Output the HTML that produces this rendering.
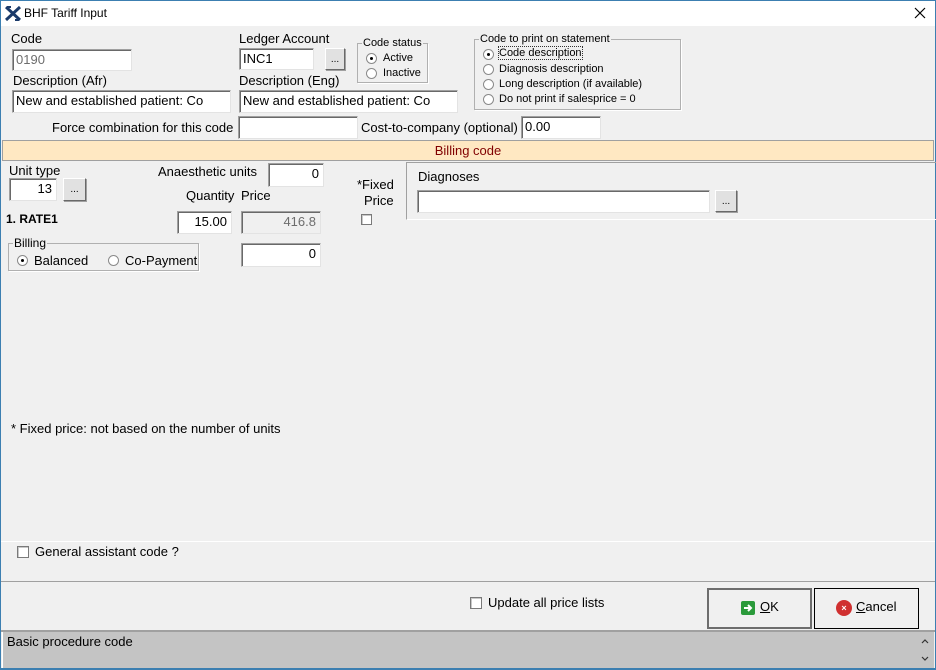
<!DOCTYPE html>
<html><head><style>
*{box-sizing:border-box;margin:0;padding:0}
body{width:936px;height:670px;position:relative;background:#f0f0f0;font-family:"Liberation Sans",sans-serif;font-size:13px;color:#000;overflow:hidden}
.a{position:absolute;white-space:nowrap}
.in{position:absolute;background:#fff;border:1px solid;border-color:#a0a0a0 #e3e3e3 #e3e3e3 #a0a0a0;box-shadow:inset 1px 1px 0 #696969;padding:2px 0 0 3px;font-size:13px;line-height:16px}
.r{text-align:right;padding-right:4px}
.btn{position:absolute;background:#e1e1e1;border:1px solid;border-color:#fff #696969 #696969 #fff;box-shadow:1px 1px 0 #a0a0a0;text-align:center;font-size:10px;line-height:22px}
.grp{position:absolute;border:1px solid #b0b0b0;box-shadow:1px 1px 0 #fff}
.grp .t{position:absolute;top:-8px;left:4px;background:#f0f0f0;font-size:11px;line-height:14px;padding:0 1px}
.rad{position:absolute;width:11px;height:11px;border-radius:50%;background:#fff;border:1px solid #8a8a8a}
.rad.on:after{content:"";position:absolute;left:3px;top:3px;width:3px;height:3px;border-radius:50%;background:#000}
.chk{position:absolute;width:12px;height:12px;background:#fff;border:1px solid #7a7a7a;box-shadow:inset 1px 1px 0 #c8c8c8}
.s{font-size:11px}
</style></head><body>
<div class="a" style="left:0;top:0;width:936px;height:26px;background:#fff"></div>
<svg class="a" style="left:5px;top:6px" width="16" height="15" viewBox="0 0 16 15"><path d="M1 1 L15 14 M15 1 L1 14" stroke="#1a3a6a" stroke-width="3"/><path d="M2 1 L6 1 M10 14 L14 14" stroke="#1a3a6a" stroke-width="2"/></svg>
<div class="a" style="left:24px;top:6px;font-size:12px">BHF Tariff Input</div>
<svg class="a" style="left:914px;top:7px" width="12" height="12"><path d="M1 1L11 11M11 1L1 11" stroke="#000" stroke-width="1.2"/></svg>
<div class="a" style="left:0;top:0;width:1px;height:670px;background:#3c7fb1"></div>
<div class="a" style="right:0;top:0;width:1px;height:670px;background:#3c7fb1"></div>
<div class="a" style="left:0;top:0;width:936px;height:1px;background:#3c7fb1"></div>
<div class="a" style="left:0;bottom:0;width:936px;height:2px;background:#3c7fb1"></div>

<div class="a" style="left:11px;top:31px">Code</div>
<div class="in" style="left:12px;top:49px;width:120px;height:22px;color:#6d6d6d">0190</div>
<div class="a" style="left:239px;top:31px">Ledger Account</div>
<div class="in" style="left:239px;top:48px;width:75px;height:22px">INC1</div>
<div class="btn" style="left:325px;top:48px;width:20px;height:22px">...</div>

<div class="grp" style="left:357px;top:43px;width:71px;height:40px"><span class="t">Code status</span></div>
<div class="rad on" style="left:366px;top:53px"></div><div class="a s" style="left:383px;top:52px">Active</div>
<div class="rad" style="left:366px;top:68px"></div><div class="a s" style="left:383px;top:67px">Inactive</div>

<div class="grp" style="left:474px;top:39px;width:207px;height:71px"><span class="t">Code to print on statement</span></div>
<div class="rad on" style="left:483px;top:49px"></div><div class="a s" style="left:499px;top:47px;outline:1px dotted #333">Code description</div>
<div class="rad" style="left:483px;top:64px"></div><div class="a s" style="left:499px;top:63px">Diagnosis description</div>
<div class="rad" style="left:483px;top:79px"></div><div class="a s" style="left:499px;top:78px">Long description (if available)</div>
<div class="rad" style="left:483px;top:94px"></div><div class="a s" style="left:499px;top:93px">Do not print if salesprice = 0</div>

<div class="a" style="left:13px;top:73px">Description (Afr)</div>
<div class="in" style="left:12px;top:90px;width:219px;height:23px">New and established patient: Co</div>
<div class="a" style="left:239px;top:73px">Description (Eng)</div>
<div class="in" style="left:239px;top:90px;width:219px;height:23px">New and established patient: Co</div>

<div class="a" style="left:52px;top:120px">Force combination for this code</div>
<div class="in" style="left:238px;top:116px;width:120px;height:23px"></div>
<div class="a" style="left:361px;top:120px">Cost-to-company (optional)</div>
<div class="in" style="left:521px;top:116px;width:80px;height:23px">0.00</div>

<div class="a" style="left:2px;top:140px;width:932px;height:21px;background:#ffe8c2;border:1px solid #a0a0a0;text-align:center;color:#800000;line-height:19px">Billing code</div>

<div class="a" style="left:9px;top:163px">Unit type</div>
<div class="in r" style="left:9px;top:178px;width:48px;height:23px">13</div>
<div class="btn" style="left:63px;top:178px;width:23px;height:23px">...</div>
<div class="a" style="left:158px;top:164px">Anaesthetic units</div>
<div class="in r" style="left:268px;top:163px;width:56px;height:24px">0</div>
<div class="a" style="left:186px;top:188px">Quantity</div>
<div class="a" style="left:241px;top:188px">Price</div>
<div class="a" style="left:6px;top:212px;font-weight:bold;font-size:12px">1. RATE1</div>
<div class="in r" style="left:177px;top:211px;width:55px;height:23px">15.00</div>
<div class="in r" style="left:241px;top:211px;width:80px;height:23px;background:#f0f0f0;color:#6d6d6d">416.8</div>
<div class="a" style="left:357px;top:177px">*Fixed</div>
<div class="a" style="left:364px;top:193px">Price</div>
<div class="chk" style="left:361px;top:214px;width:11px;height:11px"></div>

<div class="a" style="left:406px;top:162px;width:530px;height:58px;border-left:1px solid #a0a0a0;border-top:1px solid #a0a0a0;border-bottom:1px solid #fff"></div>
<div class="a" style="left:418px;top:169px">Diagnoses</div>
<div class="in" style="left:417px;top:190px;width:293px;height:23px"></div>
<div class="btn" style="left:715px;top:190px;width:22px;height:22px">...</div>

<div class="grp" style="left:8px;top:243px;width:191px;height:28px"><span class="t" style="font-size:12px">Billing</span></div>
<div class="rad on" style="left:17px;top:255px"></div><div class="a" style="left:34px;top:253px">Balanced</div>
<div class="rad" style="left:108px;top:255px"></div><div class="a" style="left:125px;top:253px">Co-Payment</div>
<div class="in r" style="left:241px;top:243px;width:80px;height:24px">0</div>

<div class="a" style="left:11px;top:421px">* Fixed price: not based on the number of units</div>

<div class="a" style="left:1px;top:541px;width:934px;height:1px;background:#fff"></div>
<div class="chk" style="left:17px;top:546px"></div>
<div class="a" style="left:35px;top:544px">General assistant code ?</div>
<div class="a" style="left:1px;top:581px;width:934px;height:1px;background:#a0a0a0"></div>

<div class="chk" style="left:470px;top:597px"></div>
<div class="a" style="left:488px;top:595px">Update all price lists</div>
<div class="a" style="left:707px;top:588px;width:105px;height:41px;border:2px solid #6d6d6d;background:#f0f0f0"></div>
<div class="a" style="left:741px;top:601px;width:14px;height:14px;background:#2a9a3a;border-radius:2px"></div>
<svg class="a" style="left:742px;top:602px" width="12" height="12"><path d="M2 6H9M6 3L9 6L6 9" stroke="#fff" stroke-width="2" fill="none"/></svg>
<div class="a" style="left:760px;top:599px"><u>O</u>K</div>
<div class="a" style="left:814px;top:588px;width:105px;height:41px;border:1px solid #000;background:#f0f0f0"></div>
<div class="a" style="left:836px;top:600px;width:16px;height:16px;background:#d03030;border-radius:50%;color:#fff;font-size:9px;line-height:16px;text-align:center;font-weight:bold">×</div>
<div class="a" style="left:856px;top:599px"><u>C</u>ancel</div>

<div class="a" style="left:1px;top:630px;width:934px;height:2px;background:#a0a0a0"></div>
<div class="a" style="left:2px;top:632px;width:932px;height:36px;background:#c4c4c4;border-left:1px solid #fff"></div>
<div class="a" style="left:7px;top:634px">Basic procedure code</div>
<svg class="a" style="left:920px;top:638px" width="10" height="26"><path d="M2 5L5 2L8 5M2 19L5 22L8 19" stroke="#333" stroke-width="1.2" fill="none"/></svg>
</body></html>
